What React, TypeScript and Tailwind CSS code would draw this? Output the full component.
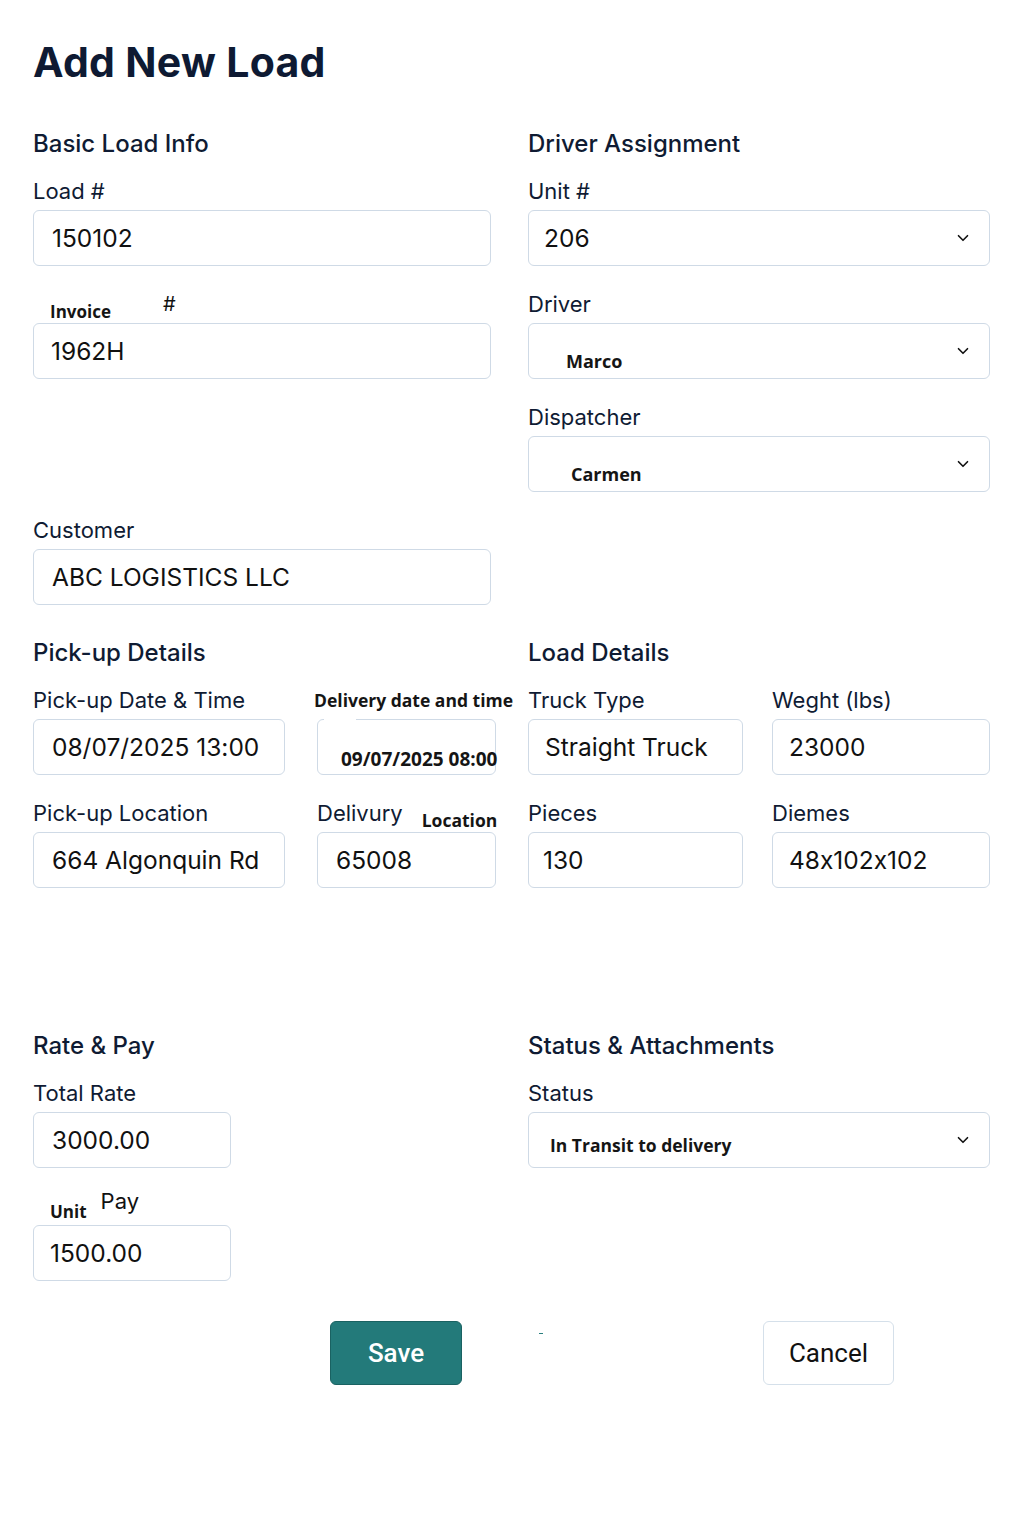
import { ChevronDown } from "lucide-react";
import type { ReactNode } from "react";

// Add New Load — form page

const sans = "font-['Inter','Noto_Sans',sans-serif] [font-feature-settings:'calt'_0]";
const boldAlt = "font-['Open_Sans','Noto_Sans',sans-serif] font-bold text-[#151515]";

function Heading({ children }: { children: ReactNode }) {
  return (
    <h2 className="text-[24px] leading-[30px] font-medium text-[#0f1b33] mb-[18px] whitespace-nowrap">
      {children}
    </h2>
  );
}

function Label({ children }: { children: ReactNode }) {
  return (
    <div className="h-[28px] mb-[5px] text-[22px] leading-[28px] text-[#0f1b33] whitespace-nowrap">
      {children}
    </div>
  );
}

function Input({ value, pl = "pl-[17px]" }: { value: string; pl?: string }) {
  return (
    <div
      className={`h-[56px] rounded-[6px] border border-[#cfdae6] bg-white flex items-center ${pl} text-[24.5px] text-[#111] whitespace-nowrap`}
    >
      {value}
    </div>
  );
}

function Select({ children, className = "" }: { children: ReactNode; className?: string }) {
  return (
    <div className="relative h-[56px] rounded-[6px] border border-[#cfdae6] bg-white">
      <div className={className}>{children}</div>
      <ChevronDown
        size={18}
        strokeWidth={2.2}
        className="absolute right-[17px] top-1/2 -translate-y-1/2 text-[#111]"
      />
    </div>
  );
}

function Field({ label, value, pl }: { label: ReactNode; value: string; pl?: string }) {
  return (
    <div>
      <Label>{label}</Label>
      <Input value={value} pl={pl} />
    </div>
  );
}

export default function App() {
  return (
    <div className={`${sans} w-[1024px] min-h-[1536px] bg-white pl-[33px] pt-[38px]`}>
      <h1 className="text-[41px] leading-[48px] font-bold text-[#0e1a33] tracking-[0.3px] mb-[43px]">
        Add New Load
      </h1>

      {/* Basic info + driver assignment */}
      <div className="grid grid-cols-[458px_462px] gap-x-[37px]">
        <div className="flex flex-col">
          <Heading>Basic Load Info</Heading>
          <Field label="Load #" value="150102" pl="pl-[18px]" />
          <div className="mt-[24px]">
            <div className="h-[33px] flex items-end">
              <span className={`${boldAlt} text-[17px] leading-[22px] ml-[17px]`}>Invoice</span>
              <span className="text-[20px] leading-[24px] text-[#111] ml-[52px] mb-[7px]">#</span>
            </div>
            <Input value="1962H" />
          </div>
          <div className="mt-[137px]">
            <Field label="Customer" value="ABC LOGISTICS LLC" pl="pl-[18px]" />
          </div>
        </div>

        <div className="flex flex-col">
          <Heading>Driver Assignment</Heading>
          <div>
            <Label>Unit #</Label>
            <Select className="h-full flex items-center pl-[15px] text-[24.5px] text-[#111]">206</Select>
          </div>
          <div className="mt-[24px]">
            <Label>Driver</Label>
            <Select className="pt-[25px] pl-[37px]">
              <span className={`${boldAlt} text-[18px] leading-[24px]`}>Marco</span>
            </Select>
          </div>
          <div className="mt-[24px]">
            <Label>Dispatcher</Label>
            <Select className="pt-[25px] pl-[42px]">
              <span className={`${boldAlt} text-[18px] leading-[24px]`}>Carmen</span>
            </Select>
          </div>
        </div>
      </div>

      {/* Pick-up + load details */}
      <div className="mt-[33px] grid grid-cols-[284px_211px_244px_218px]">
        <div className="col-span-2">
          <Heading>Pick-up Details</Heading>
        </div>
        <div className="col-span-2">
          <Heading>Load Details</Heading>
        </div>

        <div className="w-[252px]">
          <Field label="Pick-up Date & Time" value="08/07/2025 13:00" pl="pl-[18px]" />
        </div>
        <div>
          <div className="h-[28px] mb-[5px] -ml-[3px] flex items-center">
            <span className={`${boldAlt} text-[17.5px] leading-[24px] whitespace-nowrap`}>
              Delivery date and time
            </span>
          </div>
          <div className="relative w-[179px] h-[56px] rounded-[6px] border border-[#cfdae6] bg-white pt-[27px] pl-[23px]">
            <div className="absolute -top-[1px] left-[6px] w-[32px] h-[2px] bg-white" />
            <span className={`${boldAlt} text-[19px] leading-[24px] whitespace-nowrap`}>
              09/07/2025 08:00
            </span>
          </div>
        </div>
        <div className="w-[215px]">
          <Field label="Truck Type" value="Straight Truck" pl="pl-[16px]" />
        </div>
        <div>
          <Field label={<>Weght (lbs)</>} value="23000" pl="pl-[16px]" />
        </div>

        <div className="mt-[24px] w-[252px]">
          <Field label="Pick-up Location" value="664 Algonquin Rd" pl="pl-[18px]" />
        </div>
        <div className="mt-[24px]">
          <div className="h-[33px] flex items-end">
            <span className="text-[22px] leading-[28px] text-[#0f1b33] mb-[5px]">Delivury</span>
            <span className={`${boldAlt} text-[17.5px] leading-[22px] ml-[19px] mb-[1px]`}>Location</span>
          </div>
          <div className="w-[179px]">
            <Input value="65008" pl="pl-[18px]" />
          </div>
        </div>
        <div className="mt-[24px] w-[215px]">
          <Field label="Pieces" value="130" pl="pl-[14px]" />
        </div>
        <div className="mt-[24px]">
          <Field label="Diemes" value="48x102x102" pl="pl-[16px]" />
        </div>
      </div>

      {/* Rate + status */}
      <div className="mt-[143px] grid grid-cols-[458px_462px] gap-x-[37px]">
        <div className="flex flex-col">
          <Heading>Rate &amp; Pay</Heading>
          <div className="w-[198px]">
            <Field label="Total Rate" value="3000.00" pl="pl-[18px]" />
          </div>
          <div className="w-[198px] mt-[24px]">
            <div className="h-[33px] flex items-end">
              <span className={`${boldAlt} text-[17px] leading-[22px] ml-[17px] mb-[2px]`}>Unit</span>
              <span className="text-[22px] leading-[28px] text-[#111] ml-[14px] mb-[10px]">Pay</span>
            </div>
            <Input value="1500.00" pl="pl-[16px]" />
          </div>
        </div>
        <div className="flex flex-col">
          <Heading>Status &amp; Attachments</Heading>
          <div>
            <Label>Status</Label>
            <Select className="pt-[20px] pl-[21px]">
              <span className={`${boldAlt} text-[17.5px] leading-[24px] whitespace-nowrap`}>
                In Transit to delivery
              </span>
            </Select>
          </div>
        </div>
      </div>

      {/* Actions */}
      <div className="mt-[40px] flex items-start pl-[297px] font-['Roboto','Noto_Sans',sans-serif]">
        <button className="w-[132px] h-[64px] rounded-[6px] bg-[#237a7a] border border-[#1a6262] text-white text-[26px] font-medium">
          Save
        </button>
        <span className="ml-[77px] mt-[12px] w-[4px] h-[1px] bg-[#2a7f7f]" />
        <button className="ml-[220px] w-[131px] h-[64px] rounded-[6px] bg-white border border-[#d5e0ea] text-[#111] text-[26px]">
          Cancel
        </button>
      </div>
    </div>
  );
}
